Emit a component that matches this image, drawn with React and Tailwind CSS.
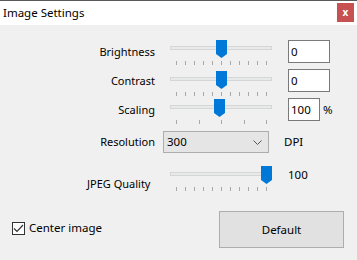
import React from 'react'

function Slider({ pos, ticks, top = 0 }) {
  const tickList = []
  for (let i = 0; i < ticks; i++) tickList.push(i)
  return (
    <div className="relative w-[102px] h-[25px] shrink-0" style={{ marginTop: top }}>
      <div className="absolute left-0 right-0 top-[6px] h-[4px] bg-[#e7eaea] border border-[#d6d6d6]" />
      <svg className="absolute top-0" style={{ left: pos }} width="11" height="18" viewBox="0 0 11 18">
        <polygon points="0,0 11,0 11,14 5.5,18 0,14" fill="#0078d7" />
      </svg>
      <div className="absolute left-[6px] right-[5px] top-[21px] h-[4px] flex justify-between">
        {tickList.map(i => (
          <div key={i} className="w-px h-[4px] bg-[#a8a8a8]" />
        ))}
      </div>
    </div>
  )
}

function TextBox({ value, width = 'w-[42px]' }) {
  return (
    <div className={`${width} h-[23px] bg-white border border-[#7a7a7a] flex items-center pl-[2px] text-[11.5px] text-black shrink-0`}>
      {value}
    </div>
  )
}

export default function App() {
  const font = { fontFamily: '"Segoe UI", "Noto Sans", sans-serif' }
  return (
    <div className="w-[357px] h-[260px] bg-[#f0f0f0] text-[11px] text-black overflow-hidden flex flex-col" style={font}>
      <div className="h-[25px] bg-white border-t border-[#5a5a5a] flex items-center justify-between pl-[3px] pr-[3px] shrink-0">
        <span className="text-[11.5px] -mt-[1px]">Image Settings</span>
        <div className="w-[17px] h-[19px] bg-[#c75050] flex items-center justify-center text-white text-[10px] font-bold -mt-[1px]">x</div>
      </div>

      <div className="flex flex-col pt-[15px]">
        <div className="flex items-start h-[23px]">
          <div className="w-[155px] text-right h-[23px] leading-[23px]">Brightness</div>
          <div className="ml-[15px]"><Slider pos={46} ticks={11} /></div>
          <div className="ml-[16px]"><TextBox value="0" /></div>
        </div>

        <div className="flex items-start h-[23px] mt-[6px]">
          <div className="w-[155px] text-right h-[23px] leading-[23px]">Contrast</div>
          <div className="ml-[15px]"><Slider pos={46} ticks={11} top={2} /></div>
          <div className="ml-[16px]"><TextBox value="0" /></div>
        </div>

        <div className="flex items-start h-[23px] mt-[6px]">
          <div className="w-[155px] text-right h-[23px] leading-[23px]">Scaling</div>
          <div className="ml-[15px]"><Slider pos={44} ticks={5} top={1} /></div>
          <div className="ml-[16px]"><TextBox value="100" width="w-[32px]" /></div>
          <span className="ml-[3px] leading-[23px] text-[11.5px]">%</span>
        </div>

        <div className="flex items-center h-[22px] mt-[10px]">
          <div className="w-[155px] text-right">Resolution</div>
          <div className="ml-[8px] w-[106px] h-[22px] bg-[#e5e5e5] border border-[#adadad] flex items-center justify-between pl-[3px] pr-[6px]">
            <span className="text-[11.5px]">300</span>
            <svg width="9" height="5" viewBox="0 0 9 5">
              <polyline points="0.5,0.5 4.5,4.5 8.5,0.5" fill="none" stroke="#555" strokeWidth="1" />
            </svg>
          </div>
          <span className="ml-[15px] text-[11.5px]">DPI</span>
        </div>

        <div className="flex items-start h-[28px] mt-[13px]">
          <div className="w-[155px] pl-[87px] pt-[10px]">
            <div className="text-left">JPEG Quality</div>
          </div>
          <div className="ml-[15px]"><Slider pos={91} ticks={11} /></div>
          <span className="ml-[16px] text-[11.5px] leading-[18px]">100</span>
        </div>

        <div className="flex items-center justify-between mt-[17px] pl-[12px] pr-[13px]">
          <div className="flex items-center mt-[-3px]">
            <div className="w-[13px] h-[13px] bg-white border border-[#333] flex items-center justify-center">
              <svg width="11" height="9" viewBox="0 0 11 9">
                <polyline points="1,4.5 4,7.5 10,1" fill="none" stroke="#333" strokeWidth="1.2" />
              </svg>
            </div>
            <span className="ml-[4px] text-[11.5px]">Center image</span>
          </div>
          <div className="w-[125px] h-[37px] bg-[#e1e1e1] border border-[#adadad] flex items-center justify-center text-[11.5px]">
            Default
          </div>
        </div>
      </div>
    </div>
  )
}
